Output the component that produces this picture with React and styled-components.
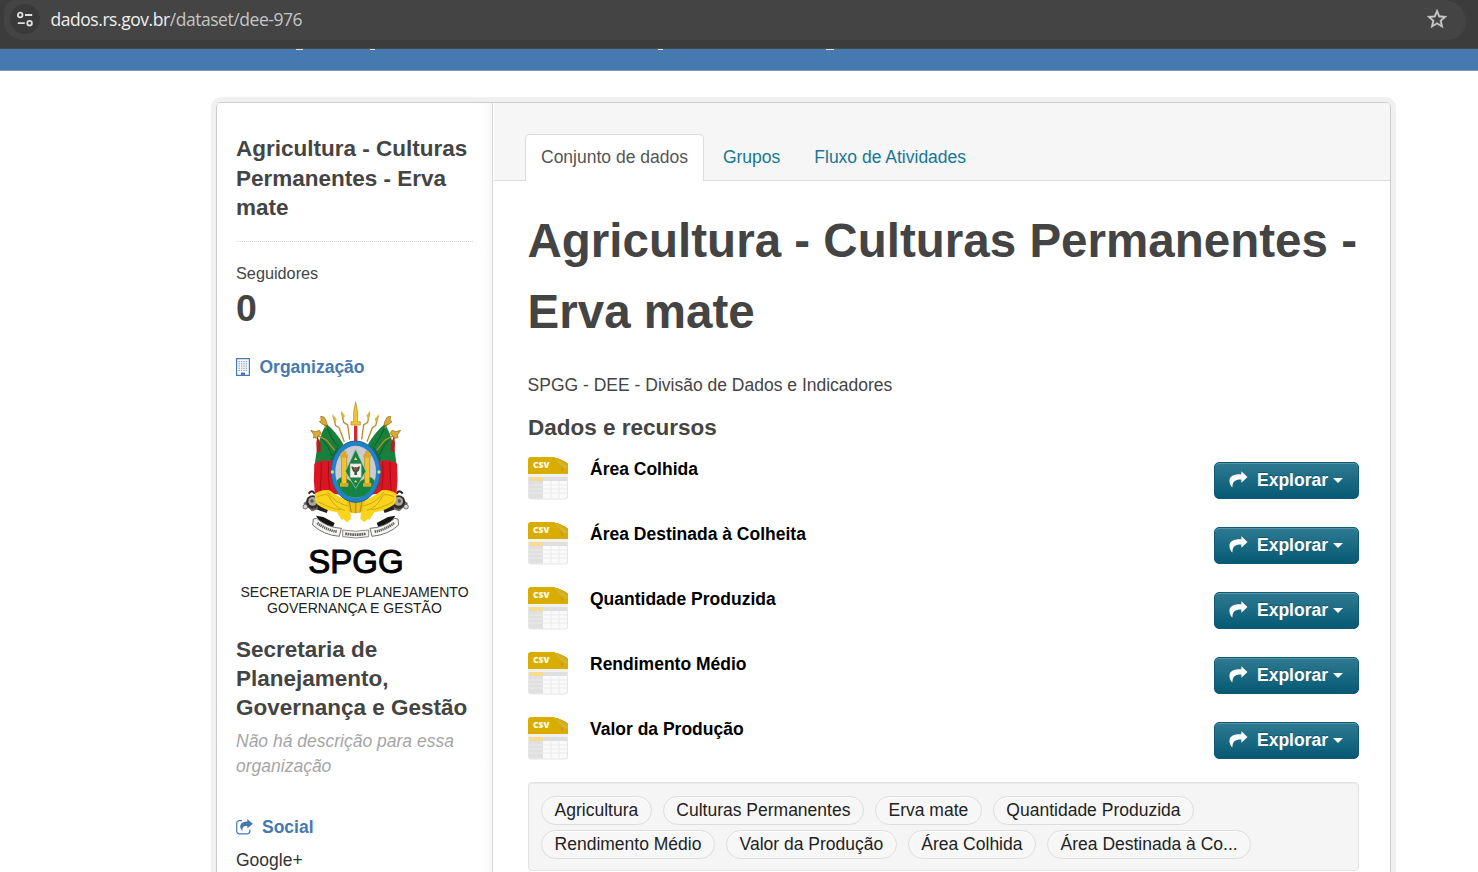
import React from "react";
import styled, { createGlobalStyle, css } from "styled-components";

const GlobalStyle = createGlobalStyle`
  * { box-sizing: border-box; }
  html, body { margin: 0; padding: 0; }
  body {
    height: 872px;
    overflow: hidden;
    background: #fff;
    color: #444;
    font: 17.5px/25px "Liberation Sans", Arial, sans-serif;
  }
  h1, h2, h3, p, ul { margin: 0; padding: 0; }
  ul { list-style: none; }
`;

const Page = styled.div`
  height: 872px;
  overflow: hidden;
  display: flex;
  flex-direction: column;
`;

/* Browser bar */
const BrowserBar = styled.div`
  flex: none;
  height: 49px;
  padding: 0 12px 8px 4px;
  background: #3c3c3c;
  border-bottom: 1px solid #484848;
`;
const Omnibox = styled.div`
  height: 40px;
  padding: 0 17.5px 2px 6px;
  display: flex;
  align-items: center;
  background: #444;
  border-radius: 14px 26px 22px 22px;
`;
const SiteInfo = styled.span`
  width: 30px;
  height: 30px;
  display: flex;
  align-items: center;
  justify-content: center;
  border-radius: 50%;
  background: #3a3a3a;
`;
const Url = styled.span`
  flex: 1;
  margin-left: 10.5px;
  font: 17.5px/24px "Open Sans", "Noto Sans", sans-serif;
  letter-spacing: -0.45px;
  color: #c4c4c4;
`;
const Host = styled.span`
  color: #efefef;
`;

/* Site masthead, scrolled almost out of view */
const Masthead = styled.div`
  flex: none;
  height: 22px;
  display: flex;
  align-items: flex-start;
  background: #4679b0;
  border-bottom: 1px solid #7a99ba;
`;
const Descender = styled.i`
  height: 1px;
  width: ${(p) => p.$w}px;
  margin-left: ${(p) => p.$gap}px;
  background: #dfe7f0;
`;

const Wrapper = styled.div`
  flex: none;
  width: 1175px;
  height: 800px;
  margin: 31px 0 0 216px;
  display: flex;
  border: 1px solid #ccc;
  border-radius: 5px;
  box-shadow: 0 0 0 5px #f0f0f0;
  overflow: hidden;
`;

/* Sidebar */
const Sidebar = styled.aside`
  width: 276px;
  flex: none;
  padding: 31px 19px 0 19px;
  border-right: 1px solid #d8d8d8;
  background: linear-gradient(to left, #f6f6f6 0, #fdfdfd 6px, #fff 16px);
`;
const SideTitle = styled.h2`
  font-size: 22.5px;
  font-weight: 700;
  line-height: ${(p) => p.$lh || 29.5}px;
  white-space: nowrap;
`;
const Divider = styled.div`
  margin: 18.5px 0 18.5px;
  border-top: 1px dotted #d6d6d6;
`;
const FollowLabel = styled.div`
  font-size: 16.25px;
  line-height: 24px;
`;
const FollowCount = styled.div`
  margin-top: 3.5px;
  font-size: 37.5px;
  font-weight: 700;
  line-height: 40px;
`;
const SectionHeading = styled.h3`
  margin-top: ${(p) => p.$top}px;
  display: flex;
  align-items: center;
  gap: ${(p) => p.$gap}px;
  font-size: 17.5px;
  line-height: 24px;
  color: #4679b0;
`;
const OrgLogo = styled.div`
  margin: 16px 0 18.5px;
  display: flex;
  flex-direction: column;
  align-items: center;
  color: #222;
  white-space: nowrap;
`;
const Acronym = styled.div`
  height: 40px;
  padding-left: 3px;
  font-size: 33px;
  line-height: 34px;
  color: #000;
  -webkit-text-stroke: 1px #000;
`;
const LogoCaption = styled.div`
  font-size: 14.05px;
  line-height: 15.5px;
  text-align: center;
`;
const EmptyText = styled.p`
  margin-top: 7.5px;
  font-style: italic;
  color: #a5a5a5;
`;
const SocialLink = styled.div`
  margin-top: 9px;
  line-height: 24px;
  color: #333;
`;

/* Main column */
const Main = styled.main`
  flex: 1;
  min-width: 0;
  margin-left: 1px;
`;
const PageHeader = styled.header`
  height: 78px;
  padding: 31px 0 0 31px;
  display: flex;
  gap: 2px;
  background: #f6f6f6;
  border-bottom: 1px solid #ddd;
`;
const Tab = styled.a`
  height: 47px;
  padding: 10px 15px 0;
  line-height: 24px;
  border: 1px solid transparent;
  border-bottom: 0;
  color: #187794;
  white-space: nowrap;
  ${(p) =>
    p.$active &&
    css`
      margin-right: 1px;
      color: #555;
      background: #fff;
      border-color: #ddd;
      border-radius: 5px 5px 0 0;
    `}
`;
const Content = styled.section`
  padding: 24px 31px 0 34px;
`;
const Title = styled.h1`
  margin-left: -0.5px;
  font-size: 47.5px;
  line-height: 71.25px;
  letter-spacing: 0.02px;
  white-space: nowrap;
`;
const Notes = styled.p`
  margin: 25.5px 0 0 -0.4px;
`;
const ResourcesTitle = styled.h2`
  margin-top: 15px;
  height: 44px;
  font-size: 22.5px;
  line-height: 29.25px;
`;
const Resource = styled.li`
  height: 65px;
  display: flex;
  align-items: flex-start;
`;
const ResourceName = styled.a`
  flex: 1;
  margin-left: 22px;
  font-weight: 700;
  line-height: 24px;
  color: #000;
`;
const ExploreButton = styled.button`
  width: 145px;
  height: 37px;
  margin-top: 5px;
  padding: 0 15px 1px 14px;
  display: flex;
  align-items: center;
  border: 1px solid #0f5a73;
  border-radius: 5px;
  background: linear-gradient(#2f7a92, #065974);
  box-shadow: inset 0 1px 0 rgba(255, 255, 255, 0.2);
  color: #fff;
  font: 700 17.5px/24px "Liberation Sans", Arial, sans-serif;
  text-shadow: 0 -1px 0 rgba(0, 0, 0, 0.25);
`;
const ExploreLabel = styled.span`
  margin: 0 5px 0 8px;
`;
const Caret = styled.i`
  margin-top: 1px;
  border: 5px solid transparent;
  border-top-color: #fff;
  border-bottom: 0;
`;
const TagBox = styled.ul`
  height: 89px;
  padding: 13px 12px 0;
  display: flex;
  flex-wrap: wrap;
  align-content: flex-start;
  gap: 5px 11px;
  background: #f5f5f5;
  border: 1px solid #e3e3e3;
  border-radius: 4px;
  box-shadow: inset 0 1px 1px rgba(0, 0, 0, 0.05);
`;
const Tag = styled.li`
  height: 29px;
  padding: 0 12.55px;
  line-height: 26px;
  border: 1px solid #ddd;
  border-radius: 15px;
  background: #f7f7f7;
  box-shadow: inset 0 1px 0 #fff;
  color: #222;
  white-space: nowrap;
`;

const TuneIcon = () => (
  <svg width="18" height="16" viewBox="0 0 18 16" fill="none" stroke="#dedede" strokeWidth="1.8">
    <circle cx="4.2" cy="4" r="2.3" />
    <path d="M9 4h7.2M1.8 12.2h7" />
    <circle cx="13.6" cy="12.2" r="2.3" />
  </svg>
);

const StarIcon = () => (
  <svg width="24" height="24" viewBox="0 0 24 24" fill="#c9c9c9" stroke="#c9c9c9" strokeWidth="0.3">
    <path d="M22 9.24l-7.19-.62L12 2 9.19 8.63 2 9.24l5.46 4.73L5.82 21 12 17.27 18.18 21l-1.63-7.03L22 9.24zM12 15.4l-3.76 2.27 1-4.28-3.32-2.88 4.38-.38L12 6.1l1.71 4.04 4.38.38-3.32 2.88 1 4.28L12 15.4z" />
  </svg>
);

const BuildingIcon = () => (
  <svg width="14" height="18" viewBox="0 0 14 18" fill="#4679b0">
    <path fillRule="evenodd" d="M0 0h14v18H0zM1.2 1.2v15.6H5V15h4v1.800h3.800V1.200z" />
    {[3, 5.2, 7.4, 9.6, 11.8].map((y) =>
      [2.5, 4.9, 7.3, 9.7].map((x) => (
        <rect key={`${x}-${y}`} x={x} y={y} width="1.4" height="1.2" opacity="0.7" />
      ))
    )}
    <path d="M5 14.500h4v2.500H5z" />
  </svg>
);

const ShareSquareIcon = () => (
  <svg width="17" height="17" viewBox="0 0 17 17">
    <path d="M6 1.600H3.400A2.700 2.700 0 0 0 .7 4.300v7.800a2.700 2.700 0 0 0 2.700 2.700h7.800a2.700 2.700 0 0 0 2.700-2.700v-1.600" fill="none" stroke="#4679b0" strokeWidth="1.200" />
    <path d="M11.300 0L16.800 4.700l-5.500 4.700V6.900C7.800 6.800 6 8 6.400 12 2.700 8.400 3.400 2.500 11.300 2.500z" fill="#4679b0" />
  </svg>
);

const ShareIcon = () => (
  <svg width="21" height="20" viewBox="0 0 21 20" fill="#fff">
    <path d="M13 .8l6.400 6.100L13 13V9.600C6.800 9.400 3.500 11.400 3.600 17.900 1.600 16.200.5 13.600.5 10.800.5 6 4.600 4 13 4z" />
  </svg>
);

const CsvIcon = () => (
  <svg width="40" height="43" viewBox="0 0 40 43">
    <defs>
      <linearGradient id="fold" x1="0.1" y1="0.9" x2="0.7" y2="0.1">
        <stop offset="0.2" stopColor="#b38c00" />
        <stop offset="0.6" stopColor="#dcb62c" />
        <stop offset="1" stopColor="#c9a005" />
      </linearGradient>
    </defs>
    <path d="M0 15h40v24.500a3 3 0 0 1-3 3H3a3 3 0 0 1-3-3z" fill="#e6e6e6" />
    <path d="M15 17h24v22q0 2.500-2.500 2.500H15z" fill="#fafafa" />
    <path d="M1 17h14v24H2.500Q1 41 1 39z" fill="#e0e0e0" />
    <path d="M0 17h40v3H0z" fill="#f1f1f1" />
    <path d="M15 20h24v4H15z" fill="#dfdfdf" />
    <path d="M1 20h14v4H1z" fill="#f6dc91" />
    <path d="M1 28h38M1 32h38M1 36h38M23 24v17M31 24v17" stroke="#ebebeb" strokeWidth="1" />
    <path d="M3 0h23l14 5.500V17H0V3a3 3 0 0 1 3-3z" fill="#d9ad00" />
    <path d="M25 0Q31 4 34 14.500q2-4 6-4V6q-1-1.500-3-2Q31 1 25 0z" fill="url(#fold)" />
    <path d="M26 0h14v6.500Q34 1.500 26 0z" fill="#fff" />
    <text x="5" y="11" fontFamily="Open Sans, sans-serif" fontSize="8" fontWeight="800" fill="#fffbe8" textLength="16.5" lengthAdjust="spacingAndGlyphs">CSV</text>
  </svg>
);

const flag = (
  <>
    <path d="M109 86Q82 132 74 210l4 8 60-30 22-40Q140 112 109 86z" fill="#16803c" />
    <path d="M94 130q22 22 32 52M108 92q16 40 34 60" stroke="#0b5a29" strokeWidth="3" fill="none" />
    <path d="M126 182l22-34q-10 30-14 60l-18 0z" fill="#0e6a31" />
    <path d="M73 206q26-14 44-8l16-6q-4 60 28 108l-50-6-36 8q-6-48-2-96z" fill="#dc1523" />
    <path d="M116 198q-4 50 4 94M94 202q0 50-4 90" stroke="#a30d18" strokeWidth="3" fill="none" />
    <path d="M75 296q20-14 44-10 34 30 78 34v30l-16 2 2 20-12 10-10-10-6 2-14-22q-34-4-60-24-8-12-6-32z" fill="#f8d51c" />
    <path d="M82 306q20-10 32-6 20 40 50 46M84 320q40 22 66 24M112 290q20 34 66 44" stroke="#c99c10" strokeWidth="2.500" fill="none" />
    <path d="M100 84l10 16M84 122l26 14 24 30" stroke="#b98b22" strokeWidth="4" fill="none" />
    <path d="M92 64l10 2 8 14 2 12-14-4-10-8 6-4zM62 106l14 4 12-4 6 10-8 6-4 8-12-2 2-8z" fill="#d9aa35" stroke="#8e6a18" strokeWidth="2" />
    <path d="M82 124l10 22 0 26-12-2-1-26z" fill="#b32024" />
    <path d="M129 62l8 30 10 6 16 42M155 52l6 30 12 8 6 44" stroke="#b88e28" strokeWidth="4" fill="none" />
    <path d="M126 56l14 16-4 12zM153 46l12 16-6 12z" fill="#e1b83c" />
  </>
);

const cannon = (
  <>
    <path d="M40 325l28-20 24 14-2 22-24 8z" fill="#6c6863" />
    <circle cx="68" cy="321" r="20" fill="#302e2d" />
    <circle cx="68" cy="319" r="13" fill="#aaa6a0" />
    <circle cx="66" cy="318" r="5" fill="#555" />
    <path d="M56 296q10-14 18 0" stroke="#26211d" strokeWidth="6" fill="none" />
    <path d="M84 330l32 10-6 14-28-10z" fill="#232120" />
    <circle cx="46" cy="335" r="7" fill="#d8d8d8" stroke="#333" strokeWidth="2" />
  </>
);

const ribbon = (
  <>
    <path d="M78 362l22 4 34 18-6 14-34-12z" fill="#171514" />
    <path d="M70 372l10-2q32 28 74 30l-6 24q-48-4-80-34z" fill="#f5f5f3" stroke="#555" strokeWidth="2.500" />
    <path d="M82 384q28 22 60 26" stroke="#625e59" strokeWidth="8" strokeDasharray="4 2" fill="none" />
  </>
);

const CoatOfArms = () => (
  <svg width="130" height="150" viewBox="0 0 390 450">
    <g>{cannon}</g>
    <g transform="matrix(-1 0 0 1 394 0)">{cannon}</g>
    <g>{flag}</g>
    <g transform="matrix(-1 0 0 1 394 0)">{flag}</g>
    <path d="M192 92h10v52h-10z" fill="#d02b30" />
    <path d="M197 20l6 30v30h8v10h-28V80h8V50z" fill="#f0c431" stroke="#b58b1d" strokeWidth="2" />
    <path d="M169 312h56l-8 38q-20 10-40 0z" fill="#ebbf18" />
    <path d="M178 320l6 32M197 322v32M216 320l-6 32" stroke="#ae8614" strokeWidth="3" />
    <ellipse cx="197" cy="230" rx="74" ry="92" fill="#2183c7" stroke="#1b6197" strokeWidth="3" />
    <ellipse cx="197" cy="230" rx="61" ry="78" fill="#cbcbd1" />
    <path d="M140 258q12-16 26-10l31 20 31-20q16-6 26 10-14 49-57 50-43-1-57-50z" fill="#158443" />
    <path d="M155 184h15v86h-15zM224 184h15v86h-15z" fill="#efc72d" stroke="#ae851a" strokeWidth="2" />
    <path d="M151 178h23v10h-23zM220 178h23v10h-23zM150 264h25v11h-25zM219 264h25v11h-25zM157 168h12v12h-12zM225 168h12v12h-12z" fill="#d7a927" />
    <path d="M197 163l31 66-31 51-31-51z" fill="#16824a" stroke="#b9c9a1" strokeWidth="2" />
    <path d="M180 206h34v42h-34z" fill="#f4f3ea" stroke="#7c937e" strokeWidth="2" />
    <path d="M184 214q10 1 13 10 3-9 13-10-2 16-9 18v8h-8v-8q-7-4-9-18z" fill="#355c48" />
    <circle cx="197" cy="221" r="5" fill="#ae4038" />
    <path d="M197 186l5 9h-10zM197 255l5 7h-10z" fill="#f3d958" />
    <circle cx="127" cy="231" r="5" fill="#d7db75" />
    <circle cx="267" cy="231" r="5" fill="#d7db75" />
    <g>{ribbon}</g>
    <g transform="matrix(-1 0 0 1 394 0)">{ribbon}</g>
    <path d="M158 405q39 7 78 0v20q-39 8-78 0z" fill="#f4f2ee" stroke="#555" strokeWidth="2" />
    <path d="M166 416q31 6 62 0" stroke="#625e59" strokeWidth="8" strokeDasharray="5 2" fill="none" />
  </svg>
);

const resources = [
  "Área Colhida",
  "Área Destinada à Colheita",
  "Quantidade Produzida",
  "Rendimento Médio",
  "Valor da Produção",
];

const tags = [
  "Agricultura",
  "Culturas Permanentes",
  "Erva mate",
  "Quantidade Produzida",
  "Rendimento Médio",
  "Valor da Produção",
  "Área Colhida",
  "Área Destinada à Co...",
];

export default function App() {
  return (
    <Page>
      <GlobalStyle />
      <BrowserBar>
        <Omnibox>
          <SiteInfo>
            <TuneIcon />
          </SiteInfo>
          <Url>
            <Host>dados.rs.gov.br</Host>/dataset/dee-976
          </Url>
          <StarIcon />
        </Omnibox>
      </BrowserBar>
      <Masthead>
        <Descender $gap={296} $w={7} />
        <Descender $gap={67} $w={5} />
        <Descender $gap={283} $w={5} />
        <Descender $gap={163} $w={8} />
      </Masthead>
      <Wrapper>
        <Sidebar>
          <SideTitle>
            Agricultura - Culturas
            <br />
            Permanentes - Erva
            <br />
            mate
          </SideTitle>
          <Divider />
          <FollowLabel>Seguidores</FollowLabel>
          <FollowCount>0</FollowCount>
          <SectionHeading $top={27} $gap={9.5}>
            <BuildingIcon />
            Organização
          </SectionHeading>
          <OrgLogo>
            <CoatOfArms />
            <Acronym>SPGG</Acronym>
            <LogoCaption>
              SECRETARIA DE PLANEJAMENTO
              <br />
              GOVERNANÇA E GESTÃO
            </LogoCaption>
          </OrgLogo>
          <SideTitle $lh={29}>
            Secretaria de
            <br />
            Planejamento,
            <br />
            Governança e Gestão
          </SideTitle>
          <EmptyText>Não há descrição para essa organização</EmptyText>
          <SectionHeading $top={36} $gap={9}>
            <ShareSquareIcon />
            Social
          </SectionHeading>
          <SocialLink>Google+</SocialLink>
        </Sidebar>
        <Main>
          <PageHeader>
            <Tab $active>Conjunto de dados</Tab>
            <Tab>Grupos</Tab>
            <Tab>Fluxo de Atividades</Tab>
          </PageHeader>
          <Content>
            <Title>
              Agricultura - Culturas Permanentes -
              <br />
              Erva mate
            </Title>
            <Notes>SPGG - DEE - Divisão de Dados e Indicadores</Notes>
            <ResourcesTitle>Dados e recursos</ResourcesTitle>
            <ul>
              {resources.map((name) => (
                <Resource key={name}>
                  <CsvIcon />
                  <ResourceName>{name}</ResourceName>
                  <ExploreButton>
                    <ShareIcon />
                    <ExploreLabel>Explorar</ExploreLabel>
                    <Caret />
                  </ExploreButton>
                </Resource>
              ))}
            </ul>
            <TagBox>
              {tags.map((tag) => (
                <Tag key={tag}>{tag}</Tag>
              ))}
            </TagBox>
          </Content>
        </Main>
      </Wrapper>
    </Page>
  );
}
